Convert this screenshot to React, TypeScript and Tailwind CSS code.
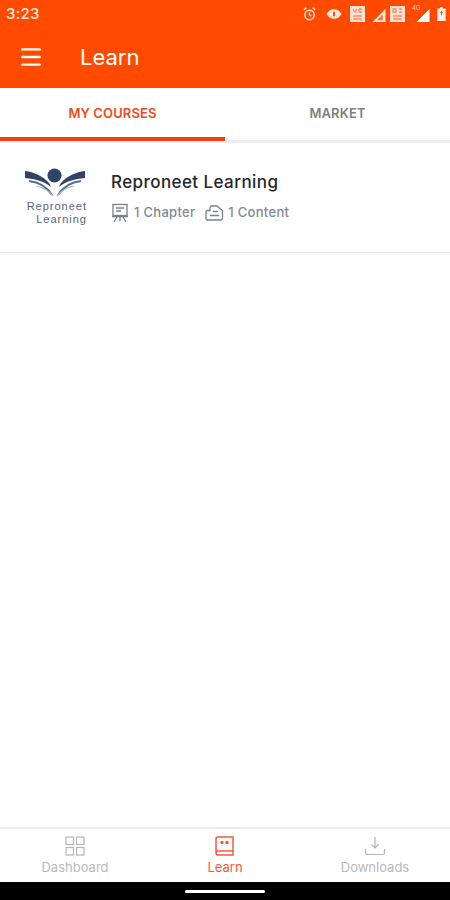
import { Menu } from "lucide-react"

const font = "font-['Inter','Noto_Sans',sans-serif]"

function StatusIcons() {
  return (
    <div className="flex items-center text-white">
      <svg width="15" height="16" viewBox="0 0 16 16" fill="none" stroke="#ffe3d6" strokeWidth="1.6">
        <circle cx="8" cy="9" r="5" />
        <path d="M8 6.500V9l2 1.200M2 3.500 4.500 1.500M14 3.500l-2.500-2" />
      </svg>
      <svg width="16" height="12" viewBox="0 0 17 12" className="ml-[9px]">
        <path d="M.5 6C3 2 5.500 1 8.500 1s5.500 1 8 5c-2.500 4-5 5-8 5s-5.500-1-8-5z" fill="#ffe3d6" />
        <rect x="7.500" y="3.500" width="2" height="5" fill="#ff4a00" />
      </svg>
      <svg width="15" height="16" viewBox="0 0 15 16" className="ml-[8px]">
        <rect width="15" height="16" fill="#ffe3d6" />
        <path d="M3 3l2 3 2-3M9 3h3M9 3v3h3M3 10h9M3 13h9" stroke="#ff8a5c" strokeWidth="1.3" fill="none" />
      </svg>
      <svg width="14" height="13" viewBox="0 0 14 14" className="ml-[7px] mt-[3px]">
        <path d="M14 0v14H0z" fill="#ffe3d6" />
        <path d="M11 6v6H5z" fill="#ff6a30" />
      </svg>
      <svg width="15" height="16" viewBox="0 0 15 16" className="ml-[4px]">
        <rect width="15" height="16" fill="#ffe3d6" />
        <path d="M3 3h3v3H3zM9 3h3M9 6h3M3 10h9M3 13h9" stroke="#ff8a5c" strokeWidth="1.3" fill="none" />
      </svg>
      <div className="relative ml-[11px] mt-[3px] w-[14px] h-[13px]">
        <span className="absolute -left-[4px] -top-[4px] text-[6px] leading-none text-[#ffd0b8]">4G</span>
        <svg width="14" height="13" viewBox="0 0 14 14">
          <path d="M14 0v14H0z" fill="#fff" />
        </svg>
      </div>
      <svg width="9" height="14" viewBox="0 0 9 15" className="ml-[7px]">
        <path d="M3 0h3v1.500h3V15H0V1.500h3z" fill="#ffeee6" />
        <path d="M4.500 4v5M3 5l1.500 2L6 5" stroke="#ff4a00" strokeWidth="1" fill="none" />
      </svg>
    </div>
  )
}

function Logo() {
  return (
    <div className="w-[64px] flex flex-col items-center">
      <svg width="62" height="30" viewBox="0 0 62 30">
        <circle cx="30.500" cy="7.500" r="7" fill="#2f4468" />
        <path d="M1 3c9 1 18 5 24 12 1 1.500 1.500 2.500 2 4C20 13 11 11 1 10z" fill="#2f4468" />
        <path d="M61 3c-9 1-18 5-24 12-1 1.500-1.500 2.500-2 4C42 13 51 11 61 10z" fill="#2f4468" />
        <path d="M5 13c9 1 18 6 23 14M57 13c-9 1-18 6-23 14" stroke="#5c6c8c" strokeWidth="2" fill="none" />
        <path d="M12 18c6 1 12 4 17 10M50 18c-6 1-12 4-17 10" stroke="#a9b3c6" strokeWidth="1.200" fill="none" />
      </svg>
      <div className="mt-[2px] self-end text-right font-['Liberation_Sans',sans-serif] text-[#56627c] text-[11px] leading-[13px] tracking-[1px]">
        <div>Reproneet</div>
        <div>Learning</div>
      </div>
    </div>
  )
}

function ChapterIcon() {
  return (
    <svg width="18" height="20" viewBox="0 0 18 20" fill="none" stroke="#77808c" strokeWidth="1.300">
      <rect x="2" y="1.500" width="14" height="11" />
      <path d="M5 5h8M5 8h5M1 13.500h16M6 14l-3 5M12 14l3 5M9 14v4" />
    </svg>
  )
}

function ContentIcon() {
  return (
    <svg width="19" height="16" viewBox="0 0 19 16" fill="none" stroke="#77808c" strokeWidth="1.300">
      <path d="M1 14V7c0-1 .5-1.500 1.500-1.500H5V3c0-1 .5-2 1.500-2H12l5.500 4.500V13c0 1-.5 2-1.500 2H2z" />
      <path d="M8 6.500h5M5 10.500h9" />
    </svg>
  )
}

function BottomTab({ label, active, icon }: { label: string; active?: boolean; icon: React.ReactNode }) {
  return (
    <div className="flex-1 flex flex-col items-center pt-[7px]">
      {icon}
      <span className={`text-[13px] leading-[16px] mt-[3px] ${active ? "text-[#f4593a]" : "text-[#b9b9b9]"}`}>{label}</span>
    </div>
  )
}

export default function App() {
  return (
    <div className={`w-[450px] h-[900px] flex flex-col bg-white ${font}`}>
      <div className="bg-[#ff4a00] h-[88px] shrink-0">
        <div className="h-[28px] flex items-center justify-between pl-[6px] pr-[4px]">
          <span className="text-[#ffe9df] text-[15px] font-medium tracking-[0.3px]">3:23</span>
          <StatusIcons />
        </div>
        <div className="flex items-center h-[60px] pb-[2px] pl-[18px]">
          <Menu size={26} strokeWidth={2.200} className="text-white" />
          <span className="ml-[36px] text-white text-[22px] leading-none">Learn</span>
        </div>
      </div>

      <div className="flex h-[55px] shrink-0 border-b-[3px] border-[#eeeef2]">
        <div className="flex-1 flex items-center justify-center border-b-[4px] border-[#ee4414] -mb-[1px] text-[#ee4a22] text-[13px] font-semibold tracking-[0.1px] pt-[3px]">
          MY COURSES
        </div>
        <div className="flex-1 flex items-center justify-center text-[#808080] text-[13px] font-semibold tracking-[0.1px]">
          MARKET
        </div>
      </div>

      <div className="flex items-start h-[110px] shrink-0 border-b border-[#e4e4e4] pl-[23px] pt-[25px]">
        <Logo />
        <div className="ml-[24px] pt-[3px]">
          <div className="text-[#24272c] text-[17px] font-medium leading-[22px] tracking-[0.42px]">Reproneet Learning</div>
          <div className="flex items-center mt-[10px] text-[#7f8996] text-[13px] font-medium tracking-[0.3px]">
            <ChapterIcon />
            <span className="ml-[5px]">1 Chapter</span>
            <span className="ml-[10px]"><ContentIcon /></span>
            <span className="ml-[4px]">1 Content</span>
          </div>
        </div>
      </div>

      <div className="flex-1" />

      <div className="flex h-[55px] shrink-0 border-t-[2px] border-[#ececec]">
        <BottomTab
          label="Dashboard"
          icon={
            <svg width="20" height="20" viewBox="0 0 20 20" fill="none" stroke="#b5b5b5" strokeWidth="1.200">
              <rect x="1" y="1" width="7.500" height="7.500" />
              <rect x="11.500" y="1" width="7.500" height="7.500" />
              <rect x="1" y="11.500" width="7.500" height="7.500" />
              <rect x="11.500" y="11.500" width="7.500" height="7.500" />
            </svg>
          }
        />
        <BottomTab
          active
          label="Learn"
          icon={
            <svg width="20" height="20" viewBox="0 0 20 20" fill="none" stroke="#f4593a" strokeWidth="1.500">
              <path d="M1 16V3c0-1.200 1-2 2-2h15v18H3c-1 0-2-.8-2-2s1-2 2-2h15" />
              <circle cx="7" cy="6.500" r="1" fill="#f4593a" />
              <circle cx="12" cy="6.500" r="1" fill="#f4593a" />
            </svg>
          }
        />
        <BottomTab
          label="Downloads"
          icon={
            <svg width="22" height="20" viewBox="0 0 22 20" fill="none" stroke="#b5b5b5" strokeWidth="1.200">
              <path d="M11 1v11M7.500 8.500 11 12l3.500-3.500M1.500 13v4c0 1 .5 1.500 1.500 1.500h16c1 0 1.500-.5 1.500-1.500v-4" />
            </svg>
          }
        />
      </div>

      <div className="h-[18px] shrink-0 bg-black flex items-center justify-center">
        <div className="w-[80px] h-[3px] rounded-full bg-white" />
      </div>
    </div>
  )
}
